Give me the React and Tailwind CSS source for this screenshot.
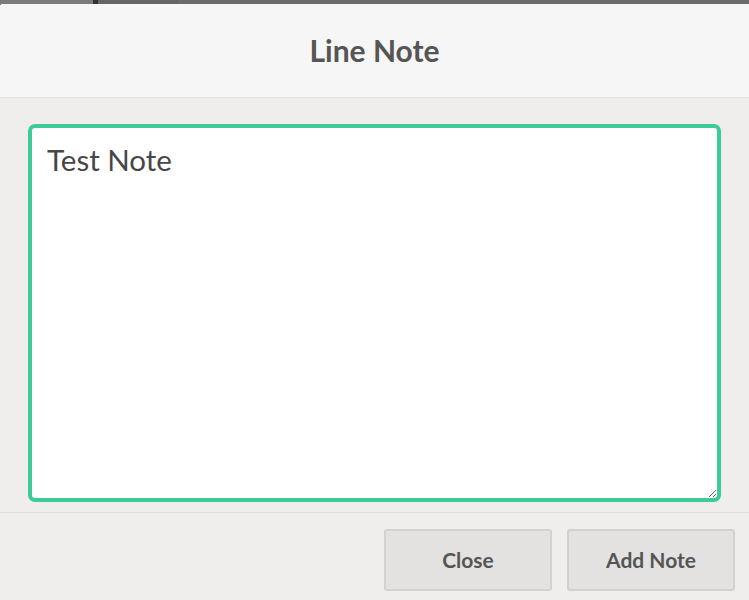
export default function App() {
  return (
    <div className="h-[600px] w-[749px] overflow-hidden bg-[#6b6b6b] font-['Lato','Open_Sans',sans-serif]">
      {/* Backdrop strip behind the modal */}
      <div className="flex h-[4px]">
        <div className="w-[93px] bg-[#7b7b7b]" />
        <div className="w-[5px] bg-[#333333]" />
        <div className="w-[80px] bg-[#666666]" />
        <div className="flex-1 bg-[#6b6b6b]" />
      </div>

      {/* Modal */}
      <div className="flex h-[596px] flex-col rounded-tl-[3px] bg-[#efeeed]">
        <header className="flex h-[94px] shrink-0 items-center justify-center border-b border-[#e2e1e1] bg-[#f7f6f6] rounded-tl-[3px]">
          <h2 className="text-[30px] font-bold text-[#555555]">Line Note</h2>
        </header>

        <div className="px-[28px] pt-[26px] pb-[10px]">
          <textarea
            defaultValue="Test Note"
            className="block h-[378px] w-full resize-y rounded-[7px] border-[4px] border-[#3ecb9a] bg-white px-[15px] py-[14px] text-[29.5px] leading-[36px] text-[#474747] outline-none"
          />
        </div>

        <footer className="flex justify-end gap-[15px] border-t border-[#dcdbda] pt-[16px] pr-[14px]">
          <button className="h-[62px] w-[168px] rounded-[3px] border-2 border-[#d2d1d0] bg-[#e3e2e1] text-[21px] font-bold text-[#555555]">
            Close
          </button>
          <button className="h-[62px] w-[168px] rounded-[3px] border-2 border-[#d2d1d0] bg-[#e3e2e1] text-[21px] font-bold text-[#555555]">
            Add Note
          </button>
        </footer>
      </div>
    </div>
  );
}
